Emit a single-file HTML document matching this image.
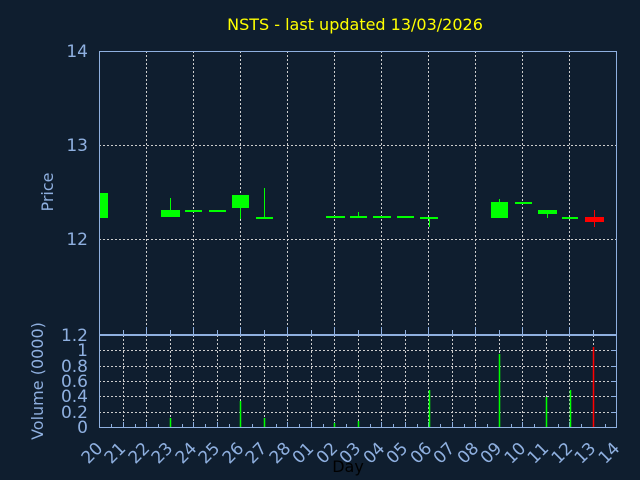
<!DOCTYPE html>
<html><head><style>
body{margin:0;background:#0f1e2f;}
svg{display:block;font-family:"DejaVu Sans","Liberation Sans",sans-serif;}
</style></head><body>
<svg width="640" height="480" viewBox="0 0 640 480">
<rect width="640" height="480" fill="#0f1e2f"/>
<text x="355" y="30" fill="#ffff00" font-size="16" text-anchor="middle">NSTS - last updated 13/03/2026</text>
<g stroke="#cccccc" stroke-width="1" stroke-dasharray="2,2" fill="none">
<line x1="99" y1="145.5" x2="617" y2="145.5"/>
<line x1="99" y1="239.5" x2="617" y2="239.5"/>
<line x1="146.5" y1="51" x2="146.5" y2="334"/><line x1="193.5" y1="51" x2="193.5" y2="334"/>
<line x1="240.5" y1="51" x2="240.5" y2="334"/><line x1="287.5" y1="51" x2="287.5" y2="334"/>
<line x1="334.5" y1="51" x2="334.5" y2="334"/><line x1="381.5" y1="51" x2="381.5" y2="334"/>
<line x1="428.5" y1="51" x2="428.5" y2="334"/><line x1="475.5" y1="51" x2="475.5" y2="334"/>
<line x1="522.5" y1="51" x2="522.5" y2="334"/><line x1="569.5" y1="51" x2="569.5" y2="334"/>
<line x1="99" y1="350.5" x2="617" y2="350.5"/><line x1="99" y1="366.5" x2="617" y2="366.5"/>
<line x1="99" y1="381.5" x2="617" y2="381.5"/><line x1="99" y1="396.5" x2="617" y2="396.5"/>
<line x1="99" y1="412.5" x2="617" y2="412.5"/>
<line x1="123.5" y1="335" x2="123.5" y2="427"/><line x1="146.5" y1="335" x2="146.5" y2="427"/>
<line x1="170.5" y1="335" x2="170.5" y2="427"/><line x1="193.5" y1="335" x2="193.5" y2="427"/>
<line x1="217.5" y1="335" x2="217.5" y2="427"/><line x1="240.5" y1="335" x2="240.5" y2="427"/>
<line x1="264.5" y1="335" x2="264.5" y2="427"/><line x1="287.5" y1="335" x2="287.5" y2="427"/>
<line x1="311.5" y1="335" x2="311.5" y2="427"/><line x1="334.5" y1="335" x2="334.5" y2="427"/>
<line x1="358.5" y1="335" x2="358.5" y2="427"/><line x1="381.5" y1="335" x2="381.5" y2="427"/>
<line x1="405.5" y1="335" x2="405.5" y2="427"/><line x1="428.5" y1="335" x2="428.5" y2="427"/>
<line x1="452.5" y1="335" x2="452.5" y2="427"/><line x1="475.5" y1="335" x2="475.5" y2="427"/>
<line x1="499.5" y1="335" x2="499.5" y2="427"/><line x1="522.5" y1="335" x2="522.5" y2="427"/>
<line x1="546.5" y1="335" x2="546.5" y2="427"/><line x1="569.5" y1="335" x2="569.5" y2="427"/>
<line x1="593.5" y1="335" x2="593.5" y2="427"/>
</g>
<!-- ticks -->
<g stroke="#8fb0e0" stroke-width="1">
<path d="M123.5 330v4M170.5 330v4M217.5 330v4M264.5 330v4M311.5 330v4M358.5 330v4M405.5 330v4M452.5 330v4M499.5 330v4M546.5 330v4M593.5 330v4
M146.5 327v7M193.5 327v7M240.5 327v7M287.5 327v7M334.5 327v7M381.5 327v7M428.5 327v7M475.5 327v7M522.5 327v7M569.5 327v7
M111.5 427v-3M135.5 427v-3M158.5 427v-3M182.5 427v-3M205.5 427v-3M229.5 427v-3M252.5 427v-3M276.5 427v-3M299.5 427v-3M323.5 427v-3M346.5 427v-3M370.5 427v-3M393.5 427v-3M417.5 427v-3M440.5 427v-3M464.5 427v-3M487.5 427v-3M511.5 427v-3M534.5 427v-3M558.5 427v-3M581.5 427v-3M605.5 427v-3
M123.5 427v-5M146.5 427v-5M170.5 427v-5M193.5 427v-5M217.5 427v-5M240.5 427v-5M264.5 427v-5M287.5 427v-5M311.5 427v-5M334.5 427v-5M358.5 427v-5M381.5 427v-5M405.5 427v-5M428.5 427v-5M452.5 427v-5M475.5 427v-5M499.5 427v-5M522.5 427v-5M546.5 427v-5M569.5 427v-5M593.5 427v-5
M611 350.5h6M611 366.5h6M611 381.5h6M611 396.5h6M611 412.5h6"/>
</g>
<g stroke="#8fb0e0" fill="none">
<rect x="99.5" y="51.5" width="517" height="283"/>
<rect x="99.5" y="335.5" width="517" height="92"/>
</g>
<g fill="#00ff00" stroke="none">
<rect x="100" y="193" width="8" height="25"/>
<rect x="161" y="210" width="19" height="7"/><rect x="170" y="198" width="1" height="12"/>
<rect x="185" y="210" width="17" height="2"/>
<rect x="209" y="210" width="17" height="2"/>
<rect x="232" y="195" width="17" height="13"/><rect x="240" y="208" width="1" height="11"/>
<rect x="256" y="217" width="17" height="2"/><rect x="264" y="188" width="1" height="29"/>
<rect x="326" y="216" width="19" height="2"/>
<rect x="350" y="216" width="17" height="2"/><rect x="358" y="212" width="1" height="4"/>
<rect x="373" y="216" width="18" height="2"/>
<rect x="397" y="216" width="17" height="2"/>
<rect x="420" y="217" width="18" height="2"/><rect x="429" y="219" width="1" height="8"/>
<rect x="491" y="202" width="17" height="16"/><rect x="499" y="199" width="1" height="3"/>
<rect x="515" y="202" width="17" height="2"/>
<rect x="538" y="210" width="19" height="4"/><rect x="547" y="214" width="1" height="4"/>
<rect x="562" y="217" width="16" height="2"/>
</g>
<rect x="585" y="217" width="19" height="5" fill="#ff0000"/><rect x="594" y="210" width="1" height="17" fill="#ff0000"/>
<g stroke="#00ff00" stroke-width="1.5">
<line x1="170.5" y1="418" x2="170.5" y2="427"/><line x1="240.5" y1="401" x2="240.5" y2="427"/>
<line x1="264.5" y1="418" x2="264.5" y2="427"/><line x1="334.5" y1="423" x2="334.5" y2="427"/>
<line x1="358.5" y1="421" x2="358.5" y2="427"/><line x1="429.5" y1="390" x2="429.5" y2="427"/>
<line x1="499.5" y1="354" x2="499.5" y2="427"/><line x1="546.5" y1="397" x2="546.5" y2="427"/>
<line x1="570.5" y1="390" x2="570.5" y2="427"/>
</g>
<line x1="593.5" y1="347" x2="593.5" y2="427" stroke="#ff0000" stroke-width="1.5"/>
<g fill="#8fb0e0" font-size="17" text-anchor="end">
<text x="88" y="57">14</text><text x="88" y="151">13</text><text x="88" y="245">12</text>
</g>
<g fill="#8fb0e0" font-size="17" text-anchor="end">
<text x="88" y="341">1.2</text><text x="88" y="356">1</text><text x="88" y="372">0.8</text>
<text x="88" y="387">0.6</text><text x="88" y="402">0.4</text><text x="88" y="418">0.2</text><text x="88" y="433">0</text>
</g>
<text transform="translate(53,192) rotate(-90)" fill="#8fb0e0" font-size="16" text-anchor="middle">Price</text>
<text transform="translate(43,381) rotate(-90)" fill="#8fb0e0" font-size="16" text-anchor="middle">Volume (0000)</text>
<g fill="#8fb0e0" font-size="17" text-anchor="middle">
<text transform="translate(96,457) rotate(-45)">20</text>
<text transform="translate(119,457) rotate(-45)">21</text>
<text transform="translate(143,457) rotate(-45)">22</text>
<text transform="translate(166,457) rotate(-45)">23</text>
<text transform="translate(190,457) rotate(-45)">24</text>
<text transform="translate(213,457) rotate(-45)">25</text>
<text transform="translate(237,457) rotate(-45)">26</text>
<text transform="translate(260,457) rotate(-45)">27</text>
<text transform="translate(284,457) rotate(-45)">28</text>
<text transform="translate(307,457) rotate(-45)">01</text>
<text transform="translate(331,457) rotate(-45)">02</text>
<text transform="translate(354,457) rotate(-45)">03</text>
<text transform="translate(378,457) rotate(-45)">04</text>
<text transform="translate(401,457) rotate(-45)">05</text>
<text transform="translate(425,457) rotate(-45)">06</text>
<text transform="translate(448,457) rotate(-45)">07</text>
<text transform="translate(472,457) rotate(-45)">08</text>
<text transform="translate(495,457) rotate(-45)">09</text>
<text transform="translate(519,457) rotate(-45)">10</text>
<text transform="translate(542,457) rotate(-45)">11</text>
<text transform="translate(566,457) rotate(-45)">12</text>
<text transform="translate(589,457) rotate(-45)">13</text>
<text transform="translate(613,457) rotate(-45)">14</text>
</g>
<text x="348" y="472" fill="#000000" font-size="16" text-anchor="middle">Day</text>
</svg>
</body></html>
